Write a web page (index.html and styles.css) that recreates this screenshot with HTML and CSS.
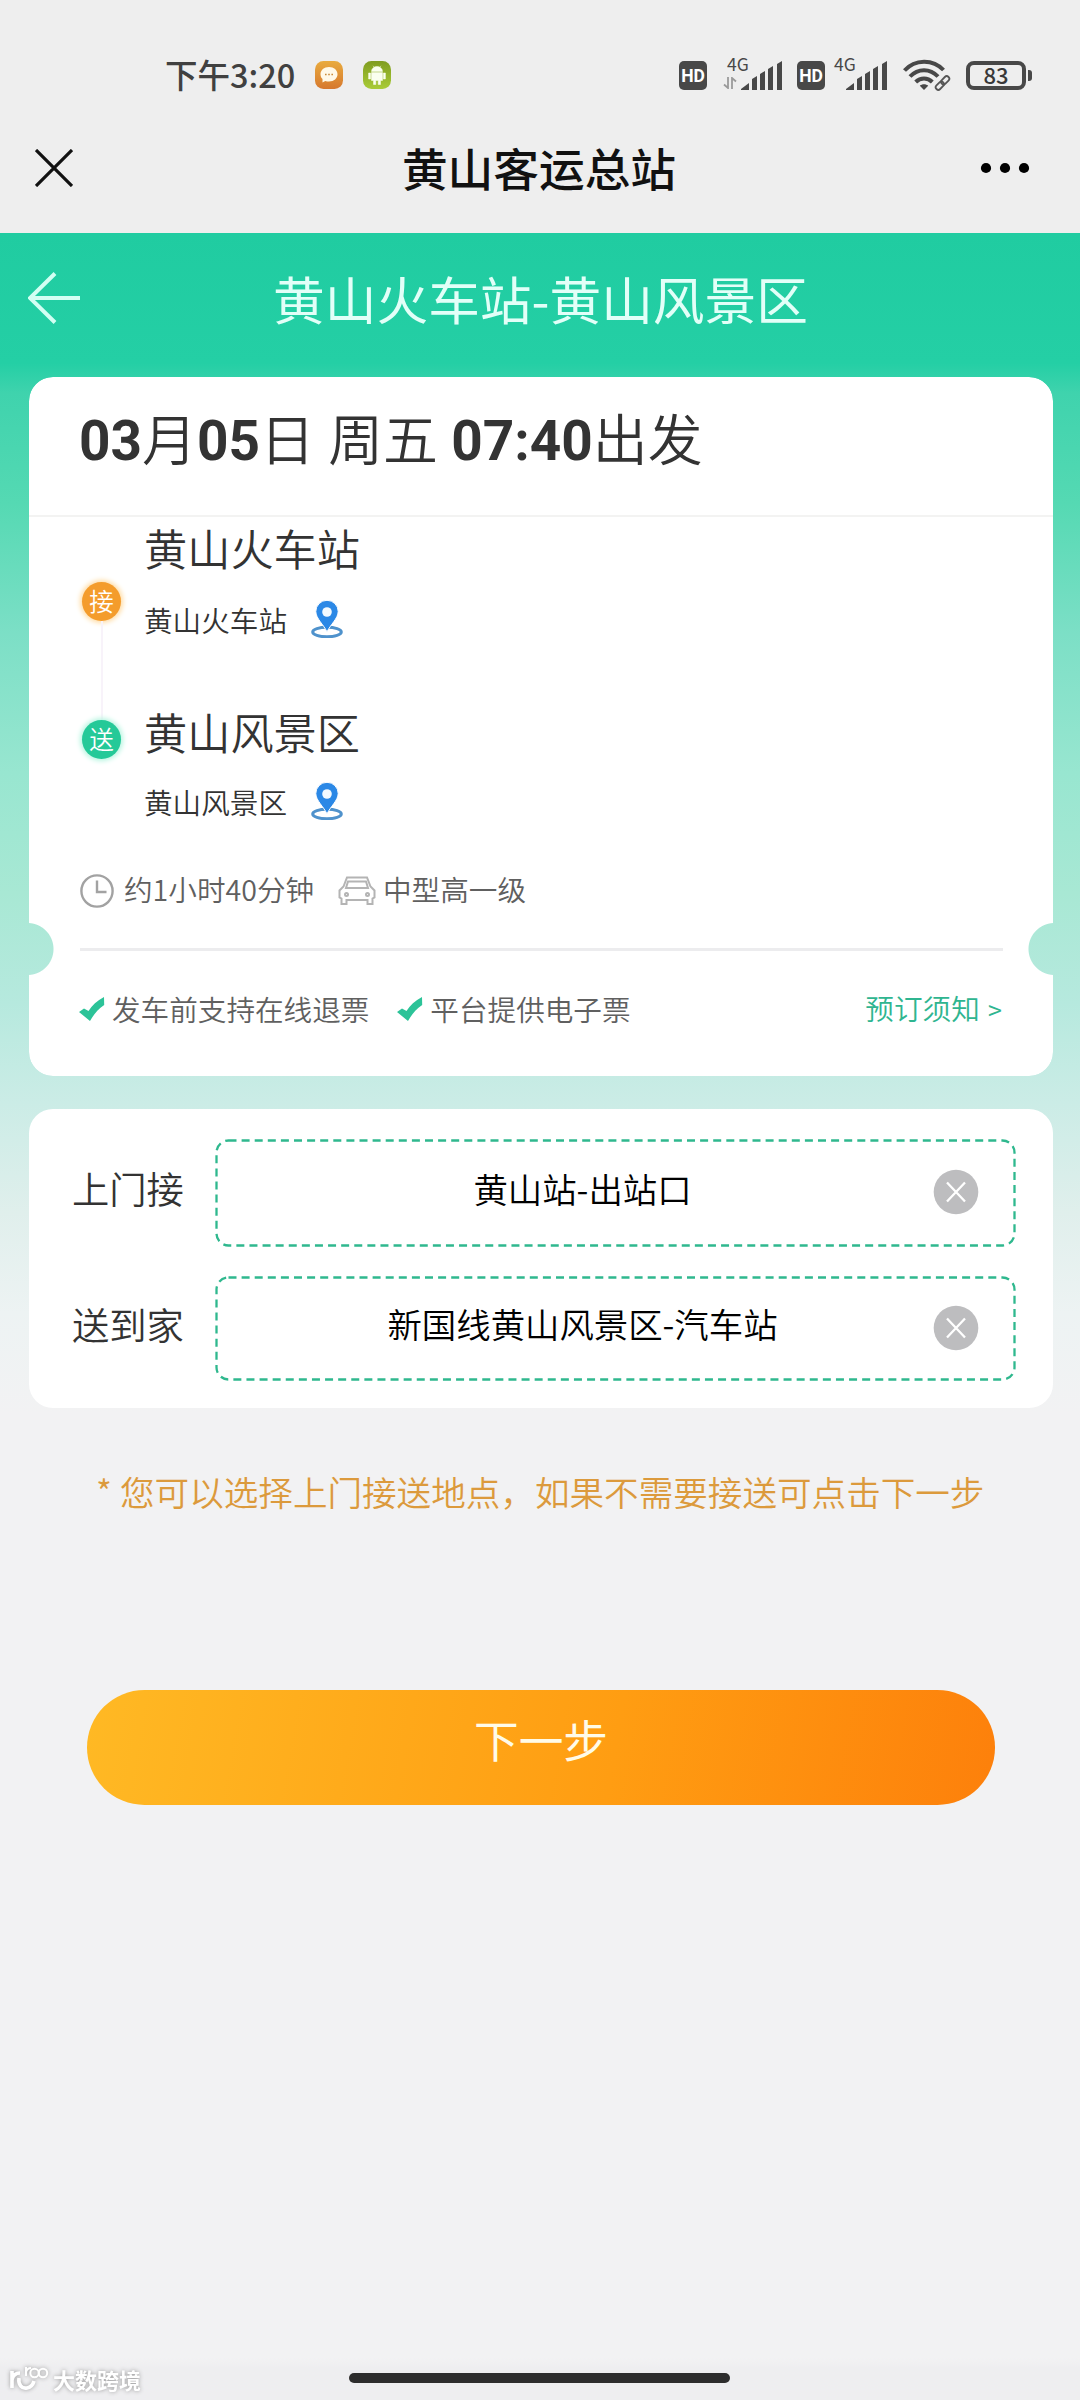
FILE: index.html
```html
<!DOCTYPE html>
<html lang="zh-CN">
<head>
<meta charset="utf-8">
<meta name="viewport" content="width=device-width">
<title>黄山客运总站</title>
<link rel="stylesheet" href="styles.css">
</head>
<body>
<svg width="0" height="0" class="defs" aria-hidden="true">
  <symbol id="pin" viewBox="0 0 32 38">
    <ellipse cx="16" cy="32" rx="14.300" ry="4.800" fill="none" stroke="#4f92cc" stroke-width="3"/>
    <path d="M16 32C13 25 4.800 18.500 4.800 11.500a11.200 11.200 0 0 1 22.400 0C27.200 18.500 19 25 16 32z" fill="#2b88e6" stroke="#fff" stroke-width="1"/>
    <circle cx="16" cy="12" r="4.800" fill="#f3faff"/>
  </symbol>
  <symbol id="check" viewBox="0 0 26 24">
    <path d="M0 15 5 11.500 9.500 14C13 8.500 18 3.500 25 0L25.200 8C19 12 15 17 11 24z" fill="#2cc398"/>
  </symbol>
  <symbol id="clear" viewBox="0 0 46 46">
    <circle cx="23" cy="23" r="22.300" fill="#bdbdbf"/>
    <path d="M14 13.500 32 32.500M32 13.500 14 32.500" stroke="#fff" stroke-width="2.300"/>
  </symbol>
  <symbol id="signal" viewBox="0 0 42 30">
    <path d="M0 29v-1l8-6v7zM11 29V18l5-3v14zM19 29V13l5-3v19zM27 29V8l5-3v24zM36 29V3l5-3v29z" fill="#484848"/>
  </symbol>
</svg>

<header class="status">
  <span class="time">下午3:20</span>
  <svg class="app-icon" viewBox="0 0 28 28">
    <defs><linearGradient id="g1" x2="0" y2="1"><stop stop-color="#e9ab3e"/><stop offset="1" stop-color="#d6782e"/></linearGradient></defs>
    <rect width="28" height="28" rx="8.500" fill="url(#g1)"/>
    <path d="M14 6c5 0 8.500 3.200 8.500 7.300S19 20.500 14 20.500c-1.500 0-2.500-.2-3.700-.6L7.500 21.500v-3.400C6.200 16.800 5.500 15.200 5.500 13.300 5.500 9.200 9 6 14 6z" fill="#fff9e8"/>
    <path d="M10 13.500h1.600M13.200 13.500h1.600M16.400 13.500H18" stroke="#c98a3a" stroke-width="1.700"/>
  </svg>
  <svg class="app-icon second" viewBox="0 0 28 28">
    <defs><linearGradient id="g2" x2="0" y2="1"><stop stop-color="#7f9c20"/><stop offset="1" stop-color="#a9cc38"/></linearGradient></defs>
    <rect width="28" height="28" rx="8.500" fill="url(#g2)"/>
    <path d="M8.500 10.500a5.500 5 0 0 1 11 0zM8.500 11.500h11v8h-2v4h-2.300v-4h-2.400v4h-2.300v-4h-2zM5.600 12h2v6h-2zM20.400 12h2v6h-2zM10 4.800l1.500 2M18 4.800l-1.500 2" fill="#fafff0" stroke="#fafff0" stroke-width=".5"/>
  </svg>
  <div class="indicators">
    <span class="hd">HD</span>
    <span class="net"><span class="gen">4G</span>
      <svg class="updown" viewBox="0 0 14 12"><path d="M5 0v11L1 7.500M9 12V1l4 3.500" fill="none" stroke="#9a9a9a" stroke-width="1.800"/></svg>
      <svg class="bars"><use href="#signal"/></svg></span>
    <span class="hd">HD</span>
    <span class="net narrow"><span class="gen">4G</span><svg class="bars"><use href="#signal"/></svg></span>
    <svg class="wifi" viewBox="0 0 48 32">
      <g fill="none" stroke="#484848" stroke-width="4">
        <path d="M1.500 11.500C12-.2 30-.2 40.500 11"/><path d="M7 17.500c8-8.500 20-8.500 28 0"/><path d="M12.700 23c4.800-4.800 11.800-4.800 16.600 0"/>
      </g>
      <path d="M21 31l-4.200-4.200c2.400-2 6-2 8.400 0z" fill="#484848"/>
      <g transform="rotate(-45 39.500 24)" fill="none" stroke="#ededed" stroke-width="5"><rect x="31.500" y="21.400" width="8.500" height="5.200" rx="2.600"/><rect x="38.500" y="21.400" width="8.500" height="5.200" rx="2.600"/></g>
      <g transform="rotate(-45 39.500 24)" fill="none" stroke="#555" stroke-width="1.800"><rect x="31" y="21.400" width="9.500" height="5.200" rx="2.600"/><rect x="38.500" y="21.400" width="9.500" height="5.200" rx="2.600"/></g>
    </svg>
    <span class="battery">83</span>
  </div>
</header>

<nav class="titlebar">
  <svg class="close" viewBox="0 0 38 38"><path d="M1 1 37 37M37 1 1 37" stroke="#111" stroke-width="3.200"/></svg>
  <h1>黄山客运总站</h1>
  <svg class="more" viewBox="0 0 50 12"><circle cx="6" cy="6" r="5.100"/><circle cx="25" cy="6" r="5.100"/><circle cx="44" cy="6" r="5.100"/></svg>
</nav>

<main class="page">
  <div class="routebar">
    <svg class="back" viewBox="0 0 54 52"><path d="M27 1.500 2 26 27 50.500M2 26H52" fill="none" stroke="#d2fff3" stroke-width="4"/></svg>
    <h2>黄山火车站-黄山风景区</h2>
  </div>

  <section class="card trip">
    <div class="depart"><b>03</b>月<b>05</b>日 周五 <b>07:40</b>出发</div>
    <div class="stops">
      <div class="rail">
        <span class="dot pick">接</span>
        <span class="line"></span>
        <span class="dot drop">送</span>
      </div>
      <div class="names">
        <p class="stop">黄山火车站</p>
        <p class="place">黄山火车站<svg class="pin"><use href="#pin"/></svg></p>
        <p class="stop to">黄山风景区</p>
        <p class="place">黄山风景区<svg class="pin"><use href="#pin"/></svg></p>
      </div>
    </div>
    <div class="meta">
      <svg class="clock" viewBox="0 0 34 34"><circle cx="17" cy="17" r="15.600"/><path d="M17 6.500V18h9.500"/></svg>
      <span class="dur">约1小时40分钟</span>
      <svg class="car" viewBox="0 0 38 30"><path d="M9 1.500h20l3.500 9 4 4v7l-2 1v5.500h-5V24h-21v4h-5v-5.500l-2-1v-7l4-4zM10 5.500h18l2 6.500H8z"/><circle cx="8.500" cy="18.500" r="1.500"/><circle cx="29.500" cy="18.500" r="1.500"/></svg>
      <span>中型高一级</span>
    </div>
    <div class="tear"></div>
    <div class="perks">
      <svg class="check"><use href="#check"/></svg><span class="refund">发车前支持在线退票</span>
      <svg class="check"><use href="#check"/></svg><span>平台提供电子票</span>
      <a class="notice">预订须知 <i>&gt;</i></a>
    </div>
  </section>

  <section class="card service">
    <div class="row">
      <label>上门接</label>
      <div class="field">
        <svg class="outline"><rect x="1.500" y="1.500" width="798" height="105" rx="12"/></svg>
        <span>黄山站-出站口</span><svg class="clear"><use href="#clear"/></svg>
      </div>
    </div>
    <div class="row second">
      <label>送到家</label>
      <div class="field">
        <svg class="outline"><rect x="1.500" y="1.500" width="798" height="102" rx="12"/></svg>
        <span>新国线黄山风景区-汽车站</span><svg class="clear"><use href="#clear"/></svg>
      </div>
    </div>
  </section>

  <p class="hint"><span class="star">*</span>您可以选择上门接送地点，如果不需要接送可点击下一步</p>
  <button class="next">下一步</button>
</main>

<footer class="bottom">
  <div class="mark">
    <svg viewBox="0 0 40 28"><g fill="none" stroke="#fff"><path d="M3 6v17M3 15c1-5 4-7 8-7M10 13c-1 7 3 11 8 10 4-1 6-3 7-7" stroke-width="3.600"/><path d="M17 2v9M17 7c1-3 3-4 5-4" stroke-width="2"/><circle cx="25.500" cy="8" r="4.200" stroke-width="2"/><circle cx="34" cy="8" r="4.200" stroke-width="2"/></g></svg>
    <span>大数跨境</span>
  </div>
  <div class="home"></div>
</footer>
</body>
</html>
```
FILE: styles.css
```css
* { box-sizing: border-box; }
body {
  margin: 0;
  width: 1080px;
  height: 2400px;
  display: flex;
  flex-direction: column;
  background: #f2f2f3;
  color: #333;
  font-family: "Noto Sans CJK SC", sans-serif;
  font-weight: 350;
}
h1, h2, p { margin: 0; font-weight: inherit; }
svg { display: block; flex: none; }
.defs { position: absolute; }

.status {
  height: 106px;
  background: #eee;
  display: flex;
  align-items: center;
  padding: 44px 48px 0 165px;
}
.time {
  width: 150px;
  padding-bottom: 2px;
  font: 500 32.5px/60px "Noto Sans CJK SC", sans-serif;
  color: #404040;
}
.app-icon { width: 28px; height: 28px; }
.app-icon.second { margin-left: 20px; }
.indicators { margin-left: auto; display: flex; align-items: center; }
.hd {
  width: 28px;
  height: 29px;
  border-radius: 5px;
  background: #484848;
  color: #fff;
  font: 700 17.5px/30px Roboto, sans-serif;
  text-align: center;
}
.net {
  width: 60px;
  height: 32px;
  margin: 0 14px 0 16px;
  display: grid;
  grid-template-columns: 18px 42px;
  align-items: end;
}
.gen {
  grid-area: 1 / 1;
  align-self: start;
  margin-left: 4px;
  font: 400 17.5px/10px "Noto Sans CJK SC", sans-serif;
  color: #484848;
}
.updown { grid-area: 1 / 1; width: 14px; height: 12px; margin-bottom: 2px; }
.bars { grid-area: 1 / 2; width: 42px; height: 30px; }
.net.narrow { width: 54px; margin: 0 15px 0 9px; grid-template-columns: 12px 42px; }
.net.narrow .gen { margin-left: 0; }
.wifi { width: 48px; height: 32px; }
.battery {
  position: relative;
  width: 60px;
  height: 29px;
  margin: 0 6px 0 15px;
  border: 4px solid #484848;
  border-radius: 8px;
  font: 500 22px/18px "Noto Sans CJK SC", sans-serif;
  text-align: center;
  color: #383838;
}
.battery::after {
  content: "";
  position: absolute;
  right: -10px;
  top: 5px;
  width: 4px;
  height: 11px;
  border-radius: 0 3px 3px 0;
  background: #484848;
}

.titlebar {
  height: 127px;
  background: #eee;
  display: flex;
  align-items: center;
  justify-content: space-between;
  padding: 0 50px 3px 35px;
}
.close { width: 38px; height: 38px; }
.titlebar h1 {
  margin: 0 0 2px 25px;
  font-size: 45.7px;
  line-height: 66px;
  font-weight: 500;
  color: #111;
}
.more { width: 50px; height: 12px; }

.page {
  flex: 1;
  background: linear-gradient(#20cca1 0, #24cfa5 130px, #3fd3ad 160px, #55d9b3 270px, #7cdfc6 400px, #98e6d0 540px, #a8e8d4 660px, #b6e9de 770px, #cbece6 870px, #e0efec 980px, #edf3f3 1080px, #f2f2f3 1180px) no-repeat;
}
.routebar {
  height: 144px;
  display: flex;
  align-items: center;
  padding: 0 28px 14px;
}
.back { width: 54px; height: 52px; }
.routebar h2 {
  flex: 1;
  margin: 0 53px 1px 0;
  font-size: 51.7px;
  line-height: 70px;
  text-align: center;
  color: #e2fff8;
  font-weight: 400;
}

.card { width: 1024px; margin-left: 29px; border-radius: 24px; background: #fff; }
.trip {
  height: 699px;
  border-radius: 0;
  background: none;
  position: relative;
  z-index: 0;
}
.trip::before {
  content: "";
  position: absolute;
  inset: 0;
  z-index: -1;
  border-radius: 24px;
  background: #fff;
  -webkit-mask: radial-gradient(circle at -1.500px 572px, transparent 25.5px, #000 26.5px), radial-gradient(circle at 1025.500px 572px, transparent 25.5px, #000 26.5px);
  -webkit-mask-composite: source-in;
  mask-composite: intersect;
}
.depart {
  height: 140px;
  padding: 26px 0 0 50px;
  border-bottom: 2px solid #f3f3f2;
  font-family: Roboto, "Noto Sans CJK SC", sans-serif;
  font-size: 54.9px;
  line-height: 76px;
  white-space: pre;
}
.depart b { font-weight: 700; }
.stops { display: flex; height: 340px; }
.rail {
  width: 115px;
  padding: 65px 0 0 53px;
  display: flex;
  flex-direction: column;
}
.dot {
  width: 39px;
  height: 39px;
  border-radius: 50%;
  color: #fff;
  font-size: 24.5px;
  line-height: 38px;
  text-align: center;
}
.pick { background: #f49c2c; box-shadow: 0 0 5px 2px #ffdca4; }
.drop { background: #25c998; box-shadow: 0 0 5px 2px #b6f5e0; }
.line { width: 2px; height: 99px; margin-left: 19px; background: #f8f3fa; }
.stop { font-size: 43.2px; line-height: 60px; }
.place {
  display: flex;
  align-items: center;
  font-size: 28.6px;
  line-height: 40px;
  margin-top: 23px;
}
.pin { width: 34px; height: 38px; margin: -3px 0 0 23px; }
.stop.to { margin-top: 61px; }
.stop.to + .place { margin-top: 21px; }
.meta, .perks { display: flex; align-items: center; font-size: 28.6px; line-height: 40px; color: #606060; }
.meta { height: 64px; padding: 3px 0 0 51px; }
.meta span { margin-top: -4px; }
.clock { width: 34px; height: 34px; fill: none; stroke: #a2a2a2; stroke-width: 2.4; }
.meta .dur { width: 214px; margin-left: 10px; }
.car { width: 38px; height: 30px; margin-right: 7px; fill: none; stroke: #b4b4b4; stroke-width: 2; }
.tear { height: 3px; margin: 27px 50px 0 51px; background: #ececee; }
.perks { margin-top: 37px; padding: 0 51px 0 50px; }
.check { width: 26px; height: 24px; margin-right: 7px; }
.refund { margin-right: 28px; }
.notice { margin-left: auto; color: #2fb590; }
.notice i { font-style: normal; font-weight: 400; font-size: 25px; margin-left: 2px; }

.service { height: 299px; margin-top: 33px; padding: 30px 37px 0 43px; }
.row { display: flex; align-items: center; height: 108px; font-size: 37.3px; }
.row.second { height: 105px; margin-top: 29px; }
.row label { width: 143px; padding-bottom: 10px; }
.field {
  position: relative;
  flex: 1;
  height: 100%;
  display: flex;
  align-items: center;
  justify-content: space-between;
  padding: 0 37px 0 17px;
  font-size: 34.4px;
  color: #000;
}
.field span { flex: 1; padding-bottom: 11px; text-align: center; }
.outline {
  position: absolute;
  inset: 0;
  width: 801px;
  height: 108px;
  fill: none;
  stroke: #2fb88e;
  stroke-width: 2.3;
  stroke-dasharray: 8 5.1;
}
.clear { width: 46px; height: 46px; margin-top: -2px; }

.hint { padding-left: 96px; margin-top: 58px; font-size: 34.6px; line-height: 50px; color: #dc9a3c; display: flex; }
.star { width: 24px; }
.next {
  display: block;
  width: 908px;
  height: 115px;
  margin: 174px 0 0 87px;
  padding: 0 0 17px;
  border: 0;
  border-radius: 58px;
  background: linear-gradient(100deg, #ffb924, #ff9d12 58%, #fd800b);
  color: #fffbe8;
  font: 400 44.7px/60px "Noto Sans CJK SC", sans-serif;
}
.bottom {
  height: 42px;
  display: grid;
  grid-template-columns: 349px 381px;
  background: linear-gradient(#f2f2f3, #eeeef0 10px);
}
.mark {
  display: flex;
  gap: 4px;
  padding: 7px 0 0 9px;
  filter: drop-shadow(0 0 2px #999);
}
.mark svg { width: 40px; height: 28px; }
.mark span { color: #fff; font: 700 22px/28px "Noto Sans CJK SC", sans-serif; }
.home { height: 10px; margin-top: 15px; border-radius: 5px; background: #2d2d2d; }
```
